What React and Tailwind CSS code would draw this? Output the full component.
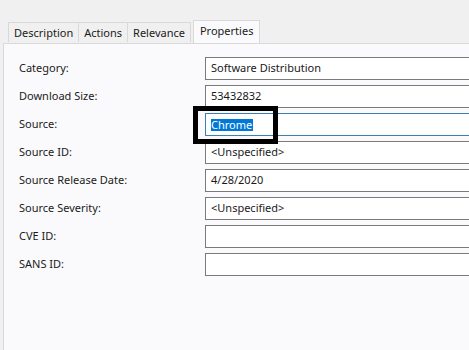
export default function App() {
  const rows = [
    ["Category:", "Software Distribution"],
    ["Download Size:", "53432832"],
    ["Source:", "Chrome"],
    ["Source ID:", "<Unspecified>"],
    ["Source Release Date:", "4/28/2020"],
    ["Source Severity:", "<Unspecified>"],
    ["CVE ID:", ""],
    ["SANS ID:", ""],
  ];
  const tabs = ["Description", "Actions", "Relevance"];
  return (
    <div
      className="w-[469px] h-[350px] bg-[#f0f0f0] overflow-hidden flex flex-col text-[11px] text-[#1a1a1a]"
      style={{ fontFamily: '"Noto Sans", "Open Sans", sans-serif' }}
    >
      <div className="flex items-end pl-[8px] pt-[20px] h-[43px] relative z-10">
        {tabs.map((t, i) => (
          <div
            key={t}
            className={`h-[20px] mb-[1px] flex items-center px-[5px] border-t border-r border-[#d9d9d9] bg-[#f0f0f0] leading-none ${i === 0 ? "border-l" : ""}`}
          >
            {t}
          </div>
        ))}
        <div className="h-[23px] ml-[2px] flex items-start pt-[4px] px-[6px] border-t border-l border-r border-[#d9d9d9] bg-[#fafafc] leading-none">
          Properties
        </div>
      </div>
      <div className="flex-1 ml-[3px] border-l border-t border-[#d9d9d9] bg-[#fafafc] pt-[13px] pl-[15px] flex flex-col gap-[5px]">
        {rows.map(([label, value]) => (
          <div key={label} className="flex items-center h-[23px]">
            <div className="w-[186px] shrink-0">{label}</div>
            {label === "Source:" ? (
              <div className="relative flex-1 h-[23px]">
                <div className="h-full border border-[#3c7fb1] bg-white flex items-center pl-[5px] -mr-[10px]">
                  <span className="bg-[#0078d7] text-white leading-[12px] h-[12px] pr-[1px]">{value}</span>
                </div>
                <div className="absolute left-[-12px] top-[-7px] w-[85px] h-[38px] border-[5px] border-black"></div>
              </div>
            ) : (
              <div className="flex-1 h-[23px] border border-[#7a7a7a] bg-white flex items-center pl-[5px] -mr-[10px]">
                {value}
              </div>
            )}
          </div>
        ))}
      </div>
    </div>
  );
}
